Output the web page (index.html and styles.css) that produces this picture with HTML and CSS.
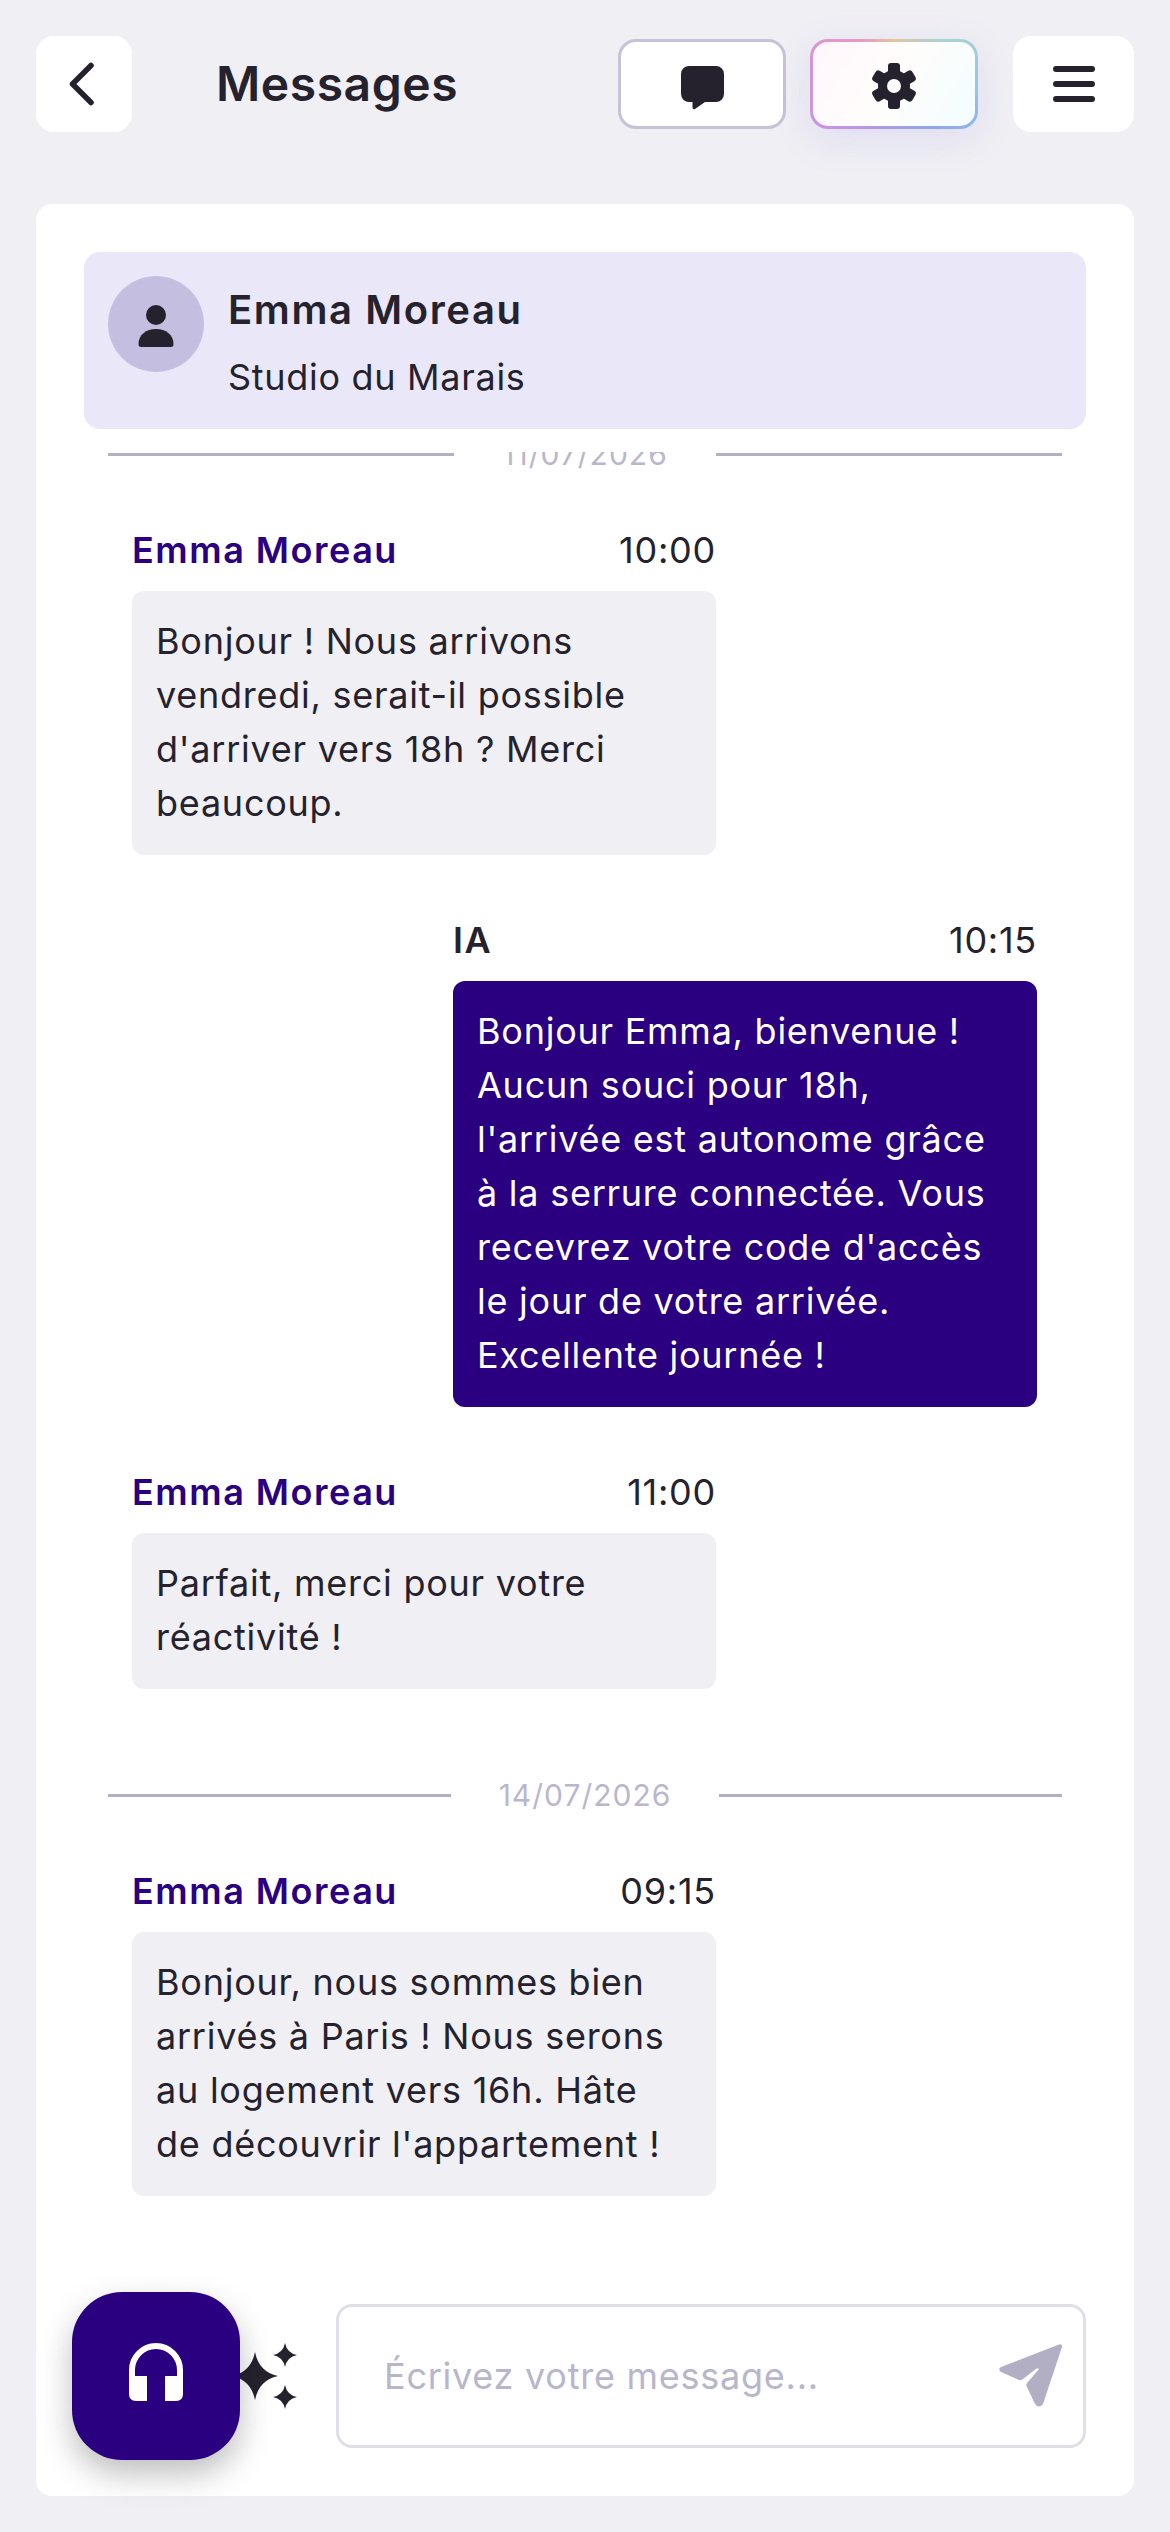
FILE: index.html

```html
<!DOCTYPE html>
<html lang="fr">
<head>
  <meta charset="UTF-8" />
  <meta name="viewport" content="width=device-width, initial-scale=1.0"/>
  <title>Messages</title>
  <link rel="stylesheet" href="styles.css">
</head>
<body>
  <header class="topbar">
    <button class="icon-btn back-btn" aria-label="Retour">
      <svg width="25" height="44" viewBox="0 0 25 44"><path d="M22 3.5 L3.500 22 L22 40.5" fill="none" stroke="#25222e" stroke-width="5.5" stroke-linecap="round" stroke-linejoin="round"/></svg>
    </button>
    <h1 class="title">Messages</h1>
    <div class="actions">
      <button class="tool-btn" aria-label="Messages">
        <svg class="chat-icon" width="43" height="44" viewBox="0 0 43 44"><path fill="#25222e" d="M8 0H35a8 8 0 0 1 8 8V28a8 8 0 0 1-8 8H24L14 43Q11.5 44 11.5 41V36H8a8 8 0 0 1-8-8V8a8 8 0 0 1 8-8Z"/></svg>
      </button>
      <button class="tool-btn tool-btn-ai" aria-label="Réglages">
        <svg class="gear-icon" width="46" height="46" viewBox="-23 -23 46 46">
          <g fill="#25222e">
            <circle r="16"/>
            <rect x="-6" y="-23" width="12" height="14" rx="3"/>
            <rect x="-6" y="-23" width="12" height="14" rx="3" transform="rotate(60)"/>
            <rect x="-6" y="-23" width="12" height="14" rx="3" transform="rotate(120)"/>
            <rect x="-6" y="-23" width="12" height="14" rx="3" transform="rotate(180)"/>
            <rect x="-6" y="-23" width="12" height="14" rx="3" transform="rotate(240)"/>
            <rect x="-6" y="-23" width="12" height="14" rx="3" transform="rotate(300)"/>
          </g>
          <circle r="7" fill="#fdfcff"/>
        </svg>
      </button>
    </div>
    <button class="icon-btn menu-btn" aria-label="Menu">
      <span class="menu-bar"></span>
      <span class="menu-bar"></span>
      <span class="menu-bar"></span>
    </button>
  </header>

  <main class="card">
    <div class="contact">
      <div class="avatar">
        <svg class="person-icon" width="36" height="42" viewBox="0 0 36 42"><circle cx="18" cy="10" r="10" fill="#25222e"/><path fill="#25222e" d="M.5 39C.5 30 8 24 18 24S35.500 30 35.500 39Q35.500 42 33 42H3Q.5 42 .5 39Z"/></svg>
      </div>
      <div class="contact-info">
        <div class="contact-name">Emma Moreau</div>
        <div class="contact-place">Studio du Marais</div>
      </div>
    </div>

    <div class="thread">
      <div class="thread-inner">
        <div class="date-row"><span class="date-line"></span><span class="date-text">11/07/2026</span><span class="date-line"></span></div>

        <div class="msg">
          <div class="msg-head"><span class="msg-name">Emma Moreau</span><span class="msg-time">10:00</span></div>
          <div class="bubble">Bonjour ! Nous arrivons vendredi, serait-il possible d'arriver vers 18h ? Merci beaucoup.</div>
        </div>

        <div class="msg msg-ai">
          <div class="msg-head"><span class="msg-name">IA</span><span class="msg-time">10:15</span></div>
          <div class="bubble">Bonjour Emma, bienvenue ! Aucun souci pour 18h, l'arrivée est autonome grâce à la serrure connectée. Vous recevrez votre code d'accès le jour de votre arrivée. Excellente journée !</div>
        </div>

        <div class="msg">
          <div class="msg-head"><span class="msg-name">Emma Moreau</span><span class="msg-time">11:00</span></div>
          <div class="bubble">Parfait, merci pour votre réactivité !</div>
        </div>

        <div class="date-row date-row-next"><span class="date-line"></span><span class="date-text">14/07/2026</span><span class="date-line"></span></div>

        <div class="msg">
          <div class="msg-head"><span class="msg-name">Emma Moreau</span><span class="msg-time">09:15</span></div>
          <div class="bubble">Bonjour, nous sommes bien arrivés à Paris ! Nous serons au logement vers 16h. Hâte de découvrir l'appartement !</div>
        </div>
      </div>
    </div>

    <div class="composer">
      <svg class="sparkles" width="66" height="70" viewBox="0 0 66 70">
        <g fill="#25222e">
          <path d="M23 11Q27 31 46 35Q27 39 23 59Q19 39 0 35Q19 31 23 11Z"/>
          <path d="M53 2Q55 12 65 14Q55 16 53 26Q51 16 41 14Q51 12 53 2Z"/>
          <path d="M53 44Q55 54 65 56Q55 58 53 68Q51 58 41 56Q51 54 53 44Z"/>
        </g>
      </svg>
      <div class="input-box">
        <span class="placeholder">Écrivez votre message...</span>
        <svg width="64" height="64" viewBox="0 0 64 64"><path fill="#b2afc4" d="M60 .5Q63.500-.5 63 3L44 60Q40 65 36 60L27.500 42Q27 40 28.500 38.500L40 25Q38.500 23.500 37 25L24 35Q22.500 36.500 20 36L2 28Q-1.500 25 2 23Z"/></svg>
      </div>
    </div>

    <button class="help-btn" aria-label="Assistance">
      <svg class="headset-icon" width="54" height="58" viewBox="0 0 54 58">
        <path d="M3 34V27A24 24 0 0 1 51 27V34" fill="none" stroke="#fff" stroke-width="6"/>
        <path fill="#fff" d="M0 33H18V58H7Q0 58 0 51Z"/>
        <path fill="#fff" d="M54 33H36V58H47Q54 58 54 51Z"/>
      </svg>
    </button>
  </main>
</body>
</html>
```

FILE: styles.css

```css
* {
  box-sizing: border-box;
}
body {
  margin: 0;
  height: 2532px;
  padding: 36px;
  display: flex;
  flex-direction: column;
  font-family: 'Inter', sans-serif;
  color: #25222e;
  background: #efeff4;
}
button {
  border: none;
  padding: 0;
  font: inherit;
}
.topbar {
  display: flex;
  align-items: center;
  height: 96px;
  margin-bottom: 72px;
}
.icon-btn {
  height: 96px;
  background: #fff;
  border-radius: 18px;
  display: flex;
  align-items: center;
  justify-content: center;
}
.back-btn {
  width: 96px;
  padding-right: 5px;
}
.menu-btn {
  width: 121px;
  margin-left: 35px;
  flex-direction: column;
  gap: 9px;
}
.menu-bar {
  width: 42px;
  height: 6px;
  border-radius: 3px;
  background: #25222e;
}
.title {
  margin: 0 auto 2px 84px;
  font-size: 48px;
  font-weight: 600;
  letter-spacing: 0.55px;
}
.actions {
  display: flex;
  gap: 24px;
}
.tool-btn {
  width: 168px;
  height: 90px;
  background: #fff;
  border: 3px solid #c6c3d8;
  border-radius: 18px;
  display: flex;
  align-items: center;
  justify-content: center;
}
.chat-icon {
  margin-top: 8px;
}
.gear-icon {
  margin-top: 3px;
}
.tool-btn-ai {
  border-color: transparent;
  background:
    linear-gradient(120deg, #fff6fd, #fffdfb 45%, #f3fdff) padding-box,
    conic-gradient(from 0deg at 50% 50%, #e6c3a0 0deg, #a8d3d2 50deg, #96c6ea 90deg, #90a8ea 135deg, #a99ae6 190deg, #cb92e4 240deg, #d793d6 285deg, #e79ac0 320deg, #e6c3a0 360deg) border-box;
  box-shadow: 0 10px 36px rgba(150, 130, 225, 0.16);
}
.card {
  flex: 1;
  position: relative;
  min-height: 0;
  display: flex;
  flex-direction: column;
  padding: 48px;
  background: #fff;
  border-radius: 16px;
}
.contact {
  display: flex;
  align-items: flex-start;
  gap: 24px;
  height: 177px;
  padding: 24px 24px 0;
  margin-bottom: 23px;
  background: #eae8f8;
  border-radius: 16px;
}
.avatar {
  width: 96px;
  height: 96px;
  border-radius: 50%;
  background: #c4bfe0;
  display: flex;
  align-items: center;
  justify-content: center;
}
.person-icon {
  margin-top: 4px;
}
.contact-info {
  padding-top: 10px;
}
.contact-name {
  font-size: 40px;
  font-weight: 600;
  line-height: 48px;
  letter-spacing: 1.6px;
  margin-bottom: 21px;
}
.contact-place {
  font-size: 36px;
  line-height: 44px;
  letter-spacing: 0.7px;
}
.thread {
  flex: 1;
  min-height: 0;
  overflow: hidden;
}
.thread-inner {
  margin-top: -20px;
}
.date-row {
  display: flex;
  align-items: center;
  height: 44px;
  padding: 0 24px;
  margin-bottom: 52px;
}
.date-row-next {
  margin-top: 84px;
}
.date-line {
  flex: 1;
  height: 3px;
  background: #b3b0c4;
}
.date-text {
  padding: 0 48px;
  font-size: 30px;
  letter-spacing: 1px;
  color: #bab7cd;
}
.msg {
  width: 584px;
  margin: 0 0 63px 48px;
}
.msg-ai {
  margin-left: 369px;
}
.msg-head {
  display: flex;
  justify-content: space-between;
  align-items: center;
  height: 44px;
  margin-bottom: 19px;
  font-size: 36px;
}
.msg-name {
  font-weight: 600;
  color: #2b0080;
  letter-spacing: 1.5px;
}
.msg-ai .msg-name {
  color: #25222e;
}
.msg-time {
  letter-spacing: 0.75px;
}
.bubble {
  padding: 23px 24px 25px;
  font-size: 36px;
  line-height: 54px;
  letter-spacing: 0.75px;
  background: #efeff4;
  border-radius: 12px;
}
.msg-ai .bubble {
  color: #fff;
  background: #2b0080;
}
.composer {
  display: flex;
  align-items: center;
  gap: 38px;
  padding-left: 148px;
}
.sparkles {
  flex: none;
}
.input-box {
  flex: 1;
  height: 144px;
  display: flex;
  align-items: center;
  justify-content: space-between;
  padding: 0 20px 0 45px;
  border: 3px solid #e0dfe9;
  border-radius: 16px;
}
.placeholder {
  font-size: 36px;
  color: #b8b6cc;
  letter-spacing: 0.75px;
}
.help-btn {
  position: absolute;
  left: 36px;
  bottom: 36px;
  width: 168px;
  height: 168px;
  border-radius: 50px;
  background: #2b0080;
  box-shadow: 0 14px 32px rgba(0, 0, 0, 0.26);
  display: flex;
  align-items: center;
  justify-content: center;
}
.headset-icon {
  margin-bottom: 8px;
}
```
